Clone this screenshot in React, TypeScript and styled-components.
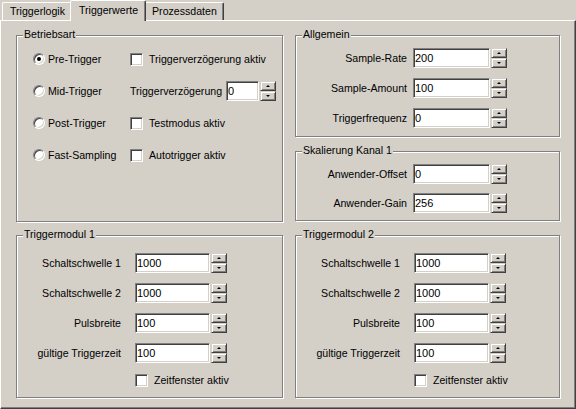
import React from 'react';
import styled, { createGlobalStyle } from 'styled-components';

const GlobalStyle = createGlobalStyle`
  html, body {
    margin: 0;
    padding: 0;
    background: #d4d0c8;
  }
`;

const Root = styled.div`
  width: 576px;
  height: 409px;
  background: #d4d0c8;
  font-family: 'Liberation Sans', Arial, sans-serif;
  font-size: 10.6px;
  color: #000;
  display: flex;
  flex-direction: column;
  overflow: hidden;
`;

const TabStrip = styled.div`
  height: 20px;
  display: flex;
  align-items: flex-end;
  padding-left: 2px;
`;

const Tab = styled.div<{ $active?: boolean }>`
  position: relative;
  box-sizing: border-box;
  height: ${(p) => (p.$active ? '21px' : '18px')};
  margin: 0 ${(p) => (p.$active ? '-2px' : '0')} ${(p) => (p.$active ? '-1px' : '0')};
  padding: ${(p) => (p.$active ? '3px 7px 0 8px' : '2px 6px 0 7px')};
  line-height: 13px;
  white-space: nowrap;
  background: #d4d0c8;
  border-top: 1px solid #fff;
  border-left: 1px solid #fff;
  border-right: 1px solid #404040;
  border-top-left-radius: 2px;
  border-top-right-radius: 2px;
  box-shadow: inset -1px 0 #808080;
  z-index: ${(p) => (p.$active ? 2 : 1)};
`;

const Panel = styled.div`
  flex: 1;
  box-sizing: border-box;
  border-style: solid;
  border-width: 1px;
  border-color: #fff #404040 #404040 #fff;
  box-shadow: inset -1px -1px #808080;
  padding: 14px 0 0 15px;
  display: grid;
  grid-template-columns: 267px 265px;
  grid-template-rows: 187px 163px;
  column-gap: 12px;
  row-gap: 13px;
  align-content: start;
`;

const Stack = styled.div`
  display: flex;
  flex-direction: column;
  gap: 14px;
`;

const Group = styled.div<{ $height?: number }>`
  position: relative;
  box-sizing: border-box;
  height: ${(p) => (p.$height ? `${p.$height}px` : 'auto')};
  border: 1px solid #808080;
  box-shadow: inset 1px 1px #fff, 1px 1px #fff;
`;

const Legend = styled.span`
  position: absolute;
  top: -8px;
  left: 6px;
  padding: 0 1px;
  line-height: 13px;
  background: #d4d0c8;
  white-space: nowrap;
`;

const ModeGrid = styled.div`
  display: grid;
  grid-template-columns: 97px 1fr;
  grid-auto-rows: 32px;
  align-items: center;
  padding: 7px 0 0 16px;
`;

const Option = styled.label<{ $gap: number }>`
  display: flex;
  align-items: center;
  gap: ${(p) => p.$gap}px;
  white-space: nowrap;
`;

const Radio = styled.span<{ $checked?: boolean }>`
  box-sizing: border-box;
  width: 12px;
  height: 12px;
  border-radius: 50%;
  border: 1px solid;
  border-color: #808080 #fff #fff #808080;
  box-shadow: inset 1px 1px #404040, inset -1px -1px #d4d0c8;
  background: #fff;
  display: inline-flex;
  align-items: center;
  justify-content: center;
  flex: none;

  &::after {
    content: '';
    display: ${(p) => (p.$checked ? 'block' : 'none')};
    width: 4px;
    height: 4px;
    border-radius: 50%;
    background: #000;
  }
`;

const Check = styled.span`
  box-sizing: border-box;
  width: 13px;
  height: 13px;
  border: 1px solid;
  border-color: #808080 #fff #fff #808080;
  box-shadow: inset 1px 1px #404040, inset -1px -1px #d4d0c8;
  background: #fff;
  flex: none;
`;

const DelayRow = styled.div`
  display: flex;
  align-items: center;
`;

const DelayLabel = styled.span`
  width: 96px;
  white-space: nowrap;
`;

const FieldGrid = styled.div<{ $label: number; $gap: number; $row: number; $top: number }>`
  display: grid;
  grid-template-columns: ${(p) => p.$label}px auto;
  column-gap: ${(p) => p.$gap}px;
  grid-auto-rows: ${(p) => p.$row}px;
  align-items: center;
  justify-content: start;
  padding-top: ${(p) => p.$top}px;
`;

const FieldLabel = styled.span`
  text-align: right;
  white-space: nowrap;
`;

const SpinBox = styled.div`
  display: flex;
  align-items: center;
  gap: 1px;
`;

const Edit = styled.input<{ $width: number }>`
  box-sizing: border-box;
  width: ${(p) => p.$width}px;
  height: 20px;
  margin: 0;
  padding: 0 1px;
  border: 1px solid;
  border-color: #808080 #fff #fff #808080;
  box-shadow: inset 1px 1px #404040, inset -1px -1px #d4d0c8;
  background: #fff;
  font: inherit;
  font-size: 11px;
  color: #000;
  outline: none;
`;

const Spinner = styled.div`
  display: flex;
  flex-direction: column;
  width: 16px;
  height: 20px;
`;

const SpinButton = styled.div<{ $up?: boolean }>`
  flex: 1;
  box-sizing: border-box;
  border: 1px solid;
  border-color: #d4d0c8 #404040 #404040 #d4d0c8;
  box-shadow: inset 1px 1px #fff, inset -1px -1px #808080;
  background: #d4d0c8;
  display: flex;
  align-items: center;
  justify-content: center;

  &::after {
    content: '';
    width: 0;
    height: 0;
    border-left: 2px solid transparent;
    border-right: 2px solid transparent;
    ${(p) => (p.$up ? 'border-bottom: 2px solid #000;' : 'border-top: 2px solid #000;')}
  }
`;

const CheckCell = styled.div`
  grid-column: 2;
  height: 24px;
  align-self: start;
  display: flex;
  align-items: center;
`;

function Spin({ value, width }: { value: string; width: number }) {
  return (
    <SpinBox>
      <Edit $width={width} defaultValue={value} readOnly />
      <Spinner>
        <SpinButton $up />
        <SpinButton />
      </Spinner>
    </SpinBox>
  );
}

function TriggerModule({ title }: { title: string }) {
  return (
    <Group>
      <Legend>{title}</Legend>
      <FieldGrid $label={104} $gap={14} $row={30} $top={12}>
        <FieldLabel>Schaltschwelle 1</FieldLabel>
        <Spin value="1000" width={75} />
        <FieldLabel>Schaltschwelle 2</FieldLabel>
        <Spin value="1000" width={75} />
        <FieldLabel>Pulsbreite</FieldLabel>
        <Spin value="100" width={75} />
        <FieldLabel>gültige Triggerzeit</FieldLabel>
        <Spin value="100" width={75} />
        <CheckCell>
          <Option $gap={6}>
            <Check />
            Zeitfenster aktiv
          </Option>
        </CheckCell>
      </FieldGrid>
    </Group>
  );
}

export default function App() {
  return (
    <Root>
      <GlobalStyle />
      <TabStrip>
        <Tab>Triggerlogik</Tab>
        <Tab $active>Triggerwerte</Tab>
        <Tab>Prozessdaten</Tab>
      </TabStrip>
      <Panel>
        <Group>
          <Legend>Betriebsart</Legend>
          <ModeGrid>
            <Option $gap={3}>
              <Radio $checked />
              Pre-Trigger
            </Option>
            <Option $gap={6}>
              <Check />
              Triggerverzögerung aktiv
            </Option>
            <Option $gap={3}>
              <Radio />
              Mid-Trigger
            </Option>
            <DelayRow>
              <DelayLabel>Triggerverzögerung</DelayLabel>
              <Spin value="0" width={33} />
            </DelayRow>
            <Option $gap={3}>
              <Radio />
              Post-Trigger
            </Option>
            <Option $gap={6}>
              <Check />
              Testmodus aktiv
            </Option>
            <Option $gap={3}>
              <Radio />
              Fast-Sampling
            </Option>
            <Option $gap={6}>
              <Check />
              Autotrigger aktiv
            </Option>
          </ModeGrid>
        </Group>
        <Stack>
          <Group $height={102}>
            <Legend>Allgemein</Legend>
            <FieldGrid $label={111} $gap={6} $row={30} $top={7}>
              <FieldLabel>Sample-Rate</FieldLabel>
              <Spin value="200" width={77} />
              <FieldLabel>Sample-Amount</FieldLabel>
              <Spin value="100" width={77} />
              <FieldLabel>Triggerfrequenz</FieldLabel>
              <Spin value="0" width={77} />
            </FieldGrid>
          </Group>
          <Group $height={70}>
            <Legend>Skalierung Kanal 1</Legend>
            <FieldGrid $label={111} $gap={6} $row={29} $top={7}>
              <FieldLabel>Anwender-Offset</FieldLabel>
              <Spin value="0" width={77} />
              <FieldLabel>Anwender-Gain</FieldLabel>
              <Spin value="256" width={77} />
            </FieldGrid>
          </Group>
        </Stack>
        <TriggerModule title="Triggermodul 1" />
        <TriggerModule title="Triggermodul 2" />
      </Panel>
    </Root>
  );
}
